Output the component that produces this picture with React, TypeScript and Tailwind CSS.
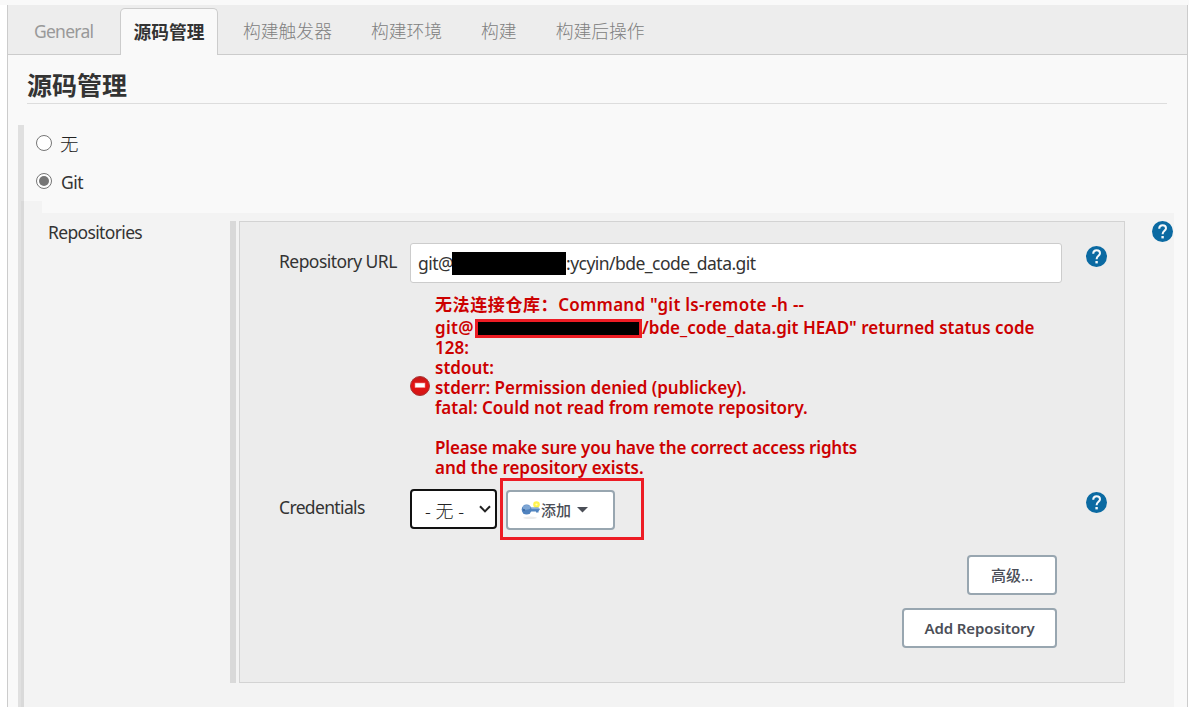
import React from "react";

function HelpIcon() {
  return (
    <svg width="21" height="21" viewBox="0 0 21 21" className="block shrink-0" aria-label="Help">
      <circle cx="10.5" cy="10.5" r="10.5" fill="#0b6aa2" />
      <path d="M7.2 7.7C7.2 5.3 8.6 4.2 10.6 4.2S14 5.4 14 7.3C14 9.8 10.6 10 10.6 13.2" fill="none" stroke="#f4f8fb" strokeWidth="2" />
      <rect x="9.4" y="15" width="2.4" height="2.4" fill="#f4f8fb" />
    </svg>
  );
}

function ErrorIcon() {
  return (
    <svg width="20" height="20" viewBox="0 0 20 20" className="block shrink-0">
      <defs>
        <linearGradient id="err" x1="0" y1="0" x2="0" y2="1">
          <stop offset="0" stopColor="#c01818" />
          <stop offset="0.45" stopColor="#e81212" />
          <stop offset="1" stopColor="#d01616" />
        </linearGradient>
      </defs>
      <circle cx="10" cy="10" r="9.5" fill="url(#err)" stroke="#a93636" />
      <rect x="5" y="7" width="10" height="4.6" fill="#fff" stroke="#e88" strokeWidth="0.6" />
    </svg>
  );
}

function KeyIcon() {
  return (
    <svg width="20" height="20" viewBox="0 0 20 20" className="block shrink-0">
      <ellipse cx="9" cy="17.8" rx="7" ry="1.2" fill="#ececec" />
      <circle cx="15.5" cy="4.5" r="3.3" fill="#fff34d" />
      <circle cx="15.5" cy="4.5" r="1.1" fill="#fffbc0" />
      <path d="M8 7.6H17.5L19 9.2L17.5 11.2V12.6H15V11.4H8Z" fill="#5285c0" />
      <path d="M9 8.6H18" stroke="#8db2de" />
      <ellipse cx="5.6" cy="9.6" rx="4.9" ry="5" fill="#4f82be" />
      <ellipse cx="5.6" cy="7.4" rx="3.8" ry="2.4" fill="#7fa6d4" />
      <circle cx="3" cy="10" r="1" fill="#3a659c" />
    </svg>
  );
}

function Radio({ checked = false }: { checked?: boolean }) {
  return (
    <span className="flex size-4 items-center justify-center rounded-full border border-[#767676] bg-white">
      {checked && <span className="size-[10px] rounded-full bg-[#767676]" />}
    </span>
  );
}

const buttonClass =
  "flex h-10 items-center rounded border-2 border-[#98a6b0] bg-white text-[15px] text-[#4b4e57]";

export default function App() {
  return (
    <div className="h-[707px] w-[1189px] overflow-hidden bg-white font-['Noto_Sans','Noto_Sans_CJK_SC',sans-serif] text-[17.5px] leading-5 text-[#333]">
      <div className="h-[5px] bg-[#f9f9f9]" />
      <div className="ml-[7px] h-[702px] w-[1181px] border-x border-[#ccc] bg-[#f9f9f9]">
        <nav className="flex h-[50px] items-end border-b border-[#ccc] bg-[#ededed] text-[#999]">
          <div className="flex h-[46px] w-28 items-center pb-px pl-[26px] text-[17.5px] tracking-[-0.75px]">General</div>
          <div className="-mb-px flex h-[47px] w-[98px] items-center justify-center rounded-t-[5px] border border-b-0 border-[#ccc] bg-[#f9f9f9] text-[17.7px] font-bold text-[#333]">
            源码管理
          </div>
          <div className="flex h-[46px] items-center gap-[39px] pl-[25px] text-[17.8px] font-light text-[#808080]">
            <span>构建触发器</span>
            <span>构建环境</span>
            <span>构建</span>
            <span>构建后操作</span>
          </div>
        </nav>
        <h1 className="mr-5 ml-[19px] flex h-[49px] items-center border-b border-[#ddd] pt-[12px] text-[25px] font-bold">
          源码管理
        </h1>
        <div className="mt-[21px] ml-[10px] flex h-[600px]">
          <div className="w-[3px] shrink-0 bg-[#e0e0e0]" />
          <div className="w-[3px] shrink-0 bg-[#e0e0e0] pt-[76px]">
            <div className="h-full bg-[#d9d9d9]" />
          </div>
          <div className="w-[1150px]">
            <div className="flex h-[38px] items-center gap-[8px] pl-3">
              <div className="-mt-[2px]"><Radio /></div>
              <span className="text-[18.5px] font-light text-[#222]">无</span>
            </div>
            <div className="flex h-[38px] items-center gap-[9px] pl-3">
              <div className="-mt-[2px]"><Radio checked /></div>
              <span className="tracking-[-0.5px]">Git</span>
            </div>
            <div className="h-3 w-[18px] bg-[#f3f3f3]" />
            <section className="flex h-[494px] items-start bg-[#f3f3f3] pt-2">
              <div className="w-[206px] pt-px pl-[24px] tracking-[-0.65px]">Repositories</div>
              <div className="h-[462px] w-[6px] bg-[#d9d9d9]" />
              <div className="ml-[3px] h-[462px] w-[886px] border border-[#d3d3d3] bg-[#ececec]">
                <div className="mt-[21px] flex h-10 items-start">
                  <label className="w-[170px] pt-[8px] pl-[39px] tracking-[-0.55px]">Repository URL</label>
                  <div className="flex h-10 w-[652px] items-center rounded-[3px] border border-[#ccc] bg-white pl-[7px]">
                    <span className="w-[34px] tracking-[-0.5px]">git@</span>
                    <span className="mt-px h-[23px] w-[114px] bg-black" />
                    <span className="tracking-[-0.53px]">:ycyin/bde_code_data.git</span>
                  </div>
                  <div className="mt-[3px] ml-6"><HelpIcon /></div>
                </div>
                <div className="mt-[9px] flex h-[186px] items-center pl-[170px] font-semibold text-[#c00]">
                  <div className="mt-[2px]"><ErrorIcon /></div>
                  <div className="ml-[5px] text-[17px] whitespace-nowrap">
                    <div className="h-[25px] leading-[25px] tracking-[0.25px]"><span className="font-bold tracking-[0.6px]">无法连接仓库：</span>Command "git ls-remote -h --</div>
                    <div className="flex h-[21px] items-center">
                      <span className="w-[40px] tracking-[0.3px]">git@</span>
                      <span className="mt-px h-[19px] w-[167px] border-[3px] border-[#ed1c24] bg-black" />
                      <span>/bde_code_data.git HEAD" returned status code</span>
                    </div>
                    <div>128:</div>
                    <div>stdout:</div>
                    <div className="tracking-[-0.02px]">stderr: Permission denied (publickey).</div>
                    <div>fatal: Could not read from remote repository.</div>
                    <div className="h-5" />
                    <div className="tracking-[-0.18px]">Please make sure you have the correct access rights</div>
                    <div className="tracking-[-0.06px]">and the repository exists.</div>
                  </div>
                </div>
                <div className="flex h-[62px] items-start">
                  <label className="w-[170px] pt-[19px] pl-[39px] tracking-[-0.65px]">Credentials</label>
                  <div className="mt-[11px] flex h-10 w-[87px] items-center justify-between rounded-[4px] border-2 border-[#111] bg-white pr-[4px] pl-[13px] text-[18px] font-light text-[#222]">
                    <span className="pt-[3px]">- 无 -</span>
                    <svg width="12" height="8" viewBox="0 0 12 8"><path d="M1 1.2 6 6.4l5-5.2" fill="none" stroke="#222" strokeWidth="2" /></svg>
                  </div>
                  <div className="ml-[3px] h-[62px] w-[144px] border-[3px] border-[#ed1c24] pt-[9px] pl-[3px]">
                    <div className={`${buttonClass} w-[109px] pl-[13px] font-medium`}>
                      <KeyIcon />
                      <span>添加</span>
                      <svg className="ml-[6px]" width="11" height="6" viewBox="0 0 11 6"><path d="M0 0h11L5.5 5.5z" fill="#4b4e57" /></svg>
                    </div>
                  </div>
                  <div className="mt-[14px] ml-[442px]"><HelpIcon /></div>
                </div>
                <div className="mt-[15px] flex flex-col items-end gap-[13px] pr-[67px]">
                  <div className={`${buttonClass} w-[90px] justify-center font-medium`}>高级...</div>
                  <div className={`${buttonClass} w-[155px] justify-center font-semibold tracking-[-0.1px]`}>Add Repository</div>
                </div>
              </div>
              <div className="ml-[27px]"><HelpIcon /></div>
            </section>
          </div>
        </div>
      </div>
    </div>
  );
}
